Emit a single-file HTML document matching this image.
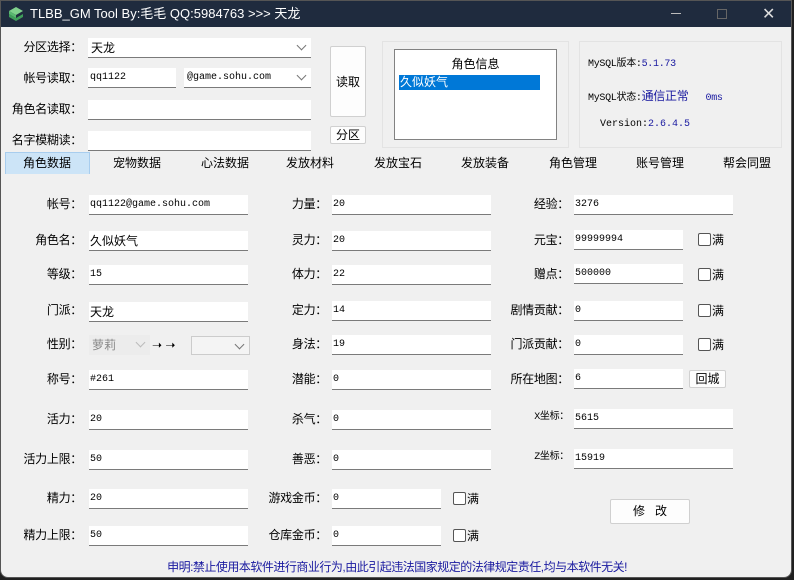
<!DOCTYPE html>
<html><head><meta charset="utf-8">
<style>
*{margin:0;padding:0;box-sizing:border-box}
body{width:794px;height:580px;overflow:hidden;background:#202020;position:relative;font-family:"Liberation Sans","Noto Sans CJK SC",sans-serif;font-size:12px;color:#000}
#win{position:absolute;left:0;top:0;width:792px;height:578px;background:#f0f0f0;border:1px solid #555;border-radius:0 0 8px 8px;overflow:hidden}
#tb{position:absolute;left:0;top:0;width:794px;height:26px;background:#1f2b3e;color:#fff;font-size:13px}
.a{position:absolute;white-space:nowrap}
.l{position:absolute;white-space:nowrap;text-align:right;line-height:20px;height:20px;letter-spacing:-0.3px}
.i{position:absolute;height:20px;background:#fff;border-bottom:1px solid #7a7a7a;font-family:"Liberation Mono","Noto Sans CJK SC",monospace;font-size:10px;line-height:20px;padding-left:1px;white-space:nowrap}
.cb{position:absolute;width:13px;height:13px;border:1px solid #555;border-radius:2px;background:#fff}
.btn{position:absolute;background:#fdfdfd;border:1px solid #d0d0d0;border-radius:2px;text-align:center;white-space:nowrap}
.sel{position:absolute;height:20px;background:#fff;border-bottom:1px solid #7a7a7a;line-height:20px;padding-left:3px}
.chev{position:absolute;right:6px;top:4px;width:7px;height:7px;border-right:1px solid #777;border-bottom:1px solid #777;transform:rotate(45deg)}
.tab{position:absolute;top:153px;font-size:12px;line-height:18px;transform:translateX(-50%);white-space:nowrap}
.blue{color:#1a1aa0}
</style></head><body>
<div id="win">
<div id="tb">
 <svg class="a" style="left:6px;top:4px" width="18" height="17" viewBox="0 0 18 17"><path d="M2 6l7-4 7 4-7 4z" fill="#7fd08c"/><path d="M2 9l7 4 7-4v3l-7 4-7-4z" fill="#3f9e5a"/><path d="M2 6l7 4v3L2 9z" fill="#58b870"/></svg>
 <div class="a" style="left:29px;top:4px;line-height:18px">TLBB_GM Tool By:毛毛 QQ:5984763 &gt;&gt;&gt; 天龙</div>
 <div class="a" style="left:670px;top:12px;width:10px;height:1px;background:#bbb"></div>
 <div class="a" style="left:716px;top:8px;width:10px;height:10px;border:1px solid #666"></div>
 <div class="a" style="left:761px;top:3px;font-size:16px;color:#ddd">✕</div>
</div>

<div class="l" style="right:709px;top:36px">分区选择：</div>
<div class="sel" style="left:87px;top:37px;width:223px">天龙<div class="chev"></div></div>
<div class="l" style="right:709px;top:67px">帐号读取：</div>
<div class="i" style="left:87px;top:67px;width:88px;padding-left:2px">qq1122</div>
<div class="sel" style="left:183px;top:67px;width:127px;font-family:'Liberation Mono',monospace;font-size:10px">@game.sohu.com<div class="chev"></div></div>
<div class="l" style="right:709px;top:98px">角色名读取：</div>
<div class="i" style="left:87px;top:99px;width:223px"></div>
<div class="l" style="right:709px;top:129px">名字模糊读：</div>
<div class="i" style="left:87px;top:130px;width:223px"></div>
<div class="btn" style="left:329px;top:45px;width:36px;height:71px;line-height:71px">读取</div>
<div class="btn" style="left:329px;top:125px;width:36px;height:18px;line-height:16px">分区</div>

<div class="a" style="left:381px;top:40px;width:187px;height:107px;border:1px solid #e3e3e3"></div>
<div class="a" style="left:393px;top:48px;width:163px;height:91px;background:#fff;border:1px solid #828282">
 <div class="a" style="left:0;top:5px;width:161px;text-align:center">角色信息</div>
 <div class="a" style="left:4px;top:25px;width:141px;height:15px;background:#0078d7;color:#fff;line-height:15px;padding-left:1px">久似妖气</div>
</div>
<div class="a" style="left:578px;top:40px;width:203px;height:107px;border:1px solid #e3e3e3"></div>
<div class="a" style="left:587px;top:53px;font-family:'Liberation Mono','Noto Sans CJK SC',monospace;font-size:10px;letter-spacing:-0.3px">MySQL版本:<span class="blue">5.1.73</span></div>
<div class="a" style="left:587px;top:86px;font-family:'Liberation Mono','Noto Sans CJK SC',monospace;font-size:10px;letter-spacing:-0.3px">MySQL状态:<span class="blue" style="font-size:12px;font-family:'Liberation Sans','Noto Sans CJK SC'">通信正常</span>&nbsp;&nbsp; <span class="blue">0ms</span></div>
<div class="a" style="left:599px;top:118px;font-family:'Liberation Mono',monospace;font-size:10px">Version:<span class="blue">2.6.4.5</span></div>

<div class="a" style="left:4px;top:151px;width:85px;height:22px;background:#cce4f7;border:1px solid #a8cdee;border-bottom:none"></div>
<div class="tab" style="left:46px">角色数据</div>
<div class="tab" style="left:136px">宠物数据</div>
<div class="tab" style="left:224px">心法数据</div>
<div class="tab" style="left:309px">发放材料</div>
<div class="tab" style="left:397px">发放宝石</div>
<div class="tab" style="left:484px">发放装备</div>
<div class="tab" style="left:572px">角色管理</div>
<div class="tab" style="left:659px">账号管理</div>
<div class="tab" style="left:746px">帮会同盟</div>

<div class="l" style="right:709px;top:193px">帐号：</div><div class="i" style="left:88px;top:194px;width:159px">qq1122@game.sohu.com</div>
<div class="l" style="right:709px;top:229px">角色名：</div><div class="i" style="left:88px;top:230px;width:159px;font-family:'Liberation Sans','Noto Sans CJK SC';font-size:12px">久似妖气</div>
<div class="l" style="right:709px;top:263px">等级：</div><div class="i" style="left:88px;top:264px;width:159px">15</div>
<div class="l" style="right:709px;top:299px">门派：</div><div class="i" style="left:88px;top:301px;width:159px;font-family:'Liberation Sans','Noto Sans CJK SC';font-size:12px">天龙</div>
<div class="l" style="right:709px;top:333px">性别：</div>
<div class="a" style="left:88px;top:334px;width:61px;height:20px;background:#ececec;color:#888;line-height:20px;padding-left:3px">萝莉<div class="chev" style="border-color:#bbb"></div></div>
<div class="a" style="left:151px;top:334px;line-height:20px;font-size:12px">➝ ➝</div>
<div class="a" style="left:190px;top:335px;width:59px;height:19px;background:#f4f4f4;border:1px solid #ccc"><div class="chev"></div></div>
<div class="l" style="right:709px;top:368px">称号：</div><div class="i" style="left:88px;top:369px;width:159px">#261</div>
<div class="l" style="right:709px;top:408px">活力：</div><div class="i" style="left:88px;top:409px;width:159px">20</div>
<div class="l" style="right:709px;top:448px">活力上限：</div><div class="i" style="left:88px;top:449px;width:159px">50</div>
<div class="l" style="right:709px;top:487px">精力：</div><div class="i" style="left:88px;top:488px;width:159px">20</div>
<div class="l" style="right:709px;top:524px">精力上限：</div><div class="i" style="left:88px;top:525px;width:159px">50</div>

<div class="l" style="right:464px;top:193px">力量：</div><div class="i" style="left:331px;top:194px;width:159px">20</div>
<div class="l" style="right:464px;top:229px">灵力：</div><div class="i" style="left:331px;top:230px;width:159px">20</div>
<div class="l" style="right:464px;top:263px">体力：</div><div class="i" style="left:331px;top:264px;width:159px">22</div>
<div class="l" style="right:464px;top:299px">定力：</div><div class="i" style="left:331px;top:300px;width:159px">14</div>
<div class="l" style="right:464px;top:333px">身法：</div><div class="i" style="left:331px;top:334px;width:159px">19</div>
<div class="l" style="right:464px;top:368px">潜能：</div><div class="i" style="left:331px;top:369px;width:159px">0</div>
<div class="l" style="right:464px;top:408px">杀气：</div><div class="i" style="left:331px;top:409px;width:159px">0</div>
<div class="l" style="right:464px;top:448px">善恶：</div><div class="i" style="left:331px;top:449px;width:159px">0</div>
<div class="l" style="right:464px;top:487px">游戏金币：</div><div class="i" style="left:331px;top:488px;width:109px">0</div>
<div class="cb" style="left:452px;top:491px"></div><div class="a" style="left:466px;top:489px">满</div>
<div class="l" style="right:464px;top:524px">仓库金币：</div><div class="i" style="left:331px;top:525px;width:109px">0</div>
<div class="cb" style="left:452px;top:528px"></div><div class="a" style="left:466px;top:526px">满</div>

<div class="l" style="right:222px;top:193px">经验：</div><div class="i" style="left:573px;top:194px;width:159px">3276</div>
<div class="l" style="right:222px;top:229px">元宝：</div><div class="i" style="left:573px;top:229px;width:109px">99999994</div>
<div class="cb" style="left:697px;top:232px"></div><div class="a" style="left:711px;top:230px">满</div>
<div class="l" style="right:222px;top:263px">赠点：</div><div class="i" style="left:573px;top:263px;width:109px">500000</div>
<div class="cb" style="left:697px;top:267px"></div><div class="a" style="left:711px;top:265px">满</div>
<div class="l" style="right:222px;top:299px">剧情贡献：</div><div class="i" style="left:573px;top:300px;width:109px">0</div>
<div class="cb" style="left:697px;top:303px"></div><div class="a" style="left:711px;top:301px">满</div>
<div class="l" style="right:222px;top:333px">门派贡献：</div><div class="i" style="left:573px;top:334px;width:109px">0</div>
<div class="cb" style="left:697px;top:337px"></div><div class="a" style="left:711px;top:335px">满</div>
<div class="l" style="right:222px;top:368px">所在地图：</div><div class="i" style="left:573px;top:368px;width:109px">6</div>
<div class="btn" style="left:688px;top:369px;width:37px;height:18px;line-height:16px">回城</div>
<div class="l" style="right:222px;top:407px;font-family:'Liberation Mono','Noto Sans CJK SC';font-size:10px">X坐标：</div><div class="i" style="left:573px;top:408px;width:159px">5615</div>
<div class="l" style="right:222px;top:447px;font-family:'Liberation Mono','Noto Sans CJK SC';font-size:10px">Z坐标：</div><div class="i" style="left:573px;top:448px;width:159px">15919</div>
<div class="btn" style="left:609px;top:498px;width:80px;height:25px;line-height:23px;letter-spacing:10px;padding-left:10px">修改</div>

<div class="a blue" style="left:0;width:792px;top:557px;text-align:center;font-size:12px;letter-spacing:-0.5px">申明:禁止使用本软件进行商业行为,由此引起违法国家规定的法律规定责任,均与本软件无关!</div>
</div>
</body></html>
